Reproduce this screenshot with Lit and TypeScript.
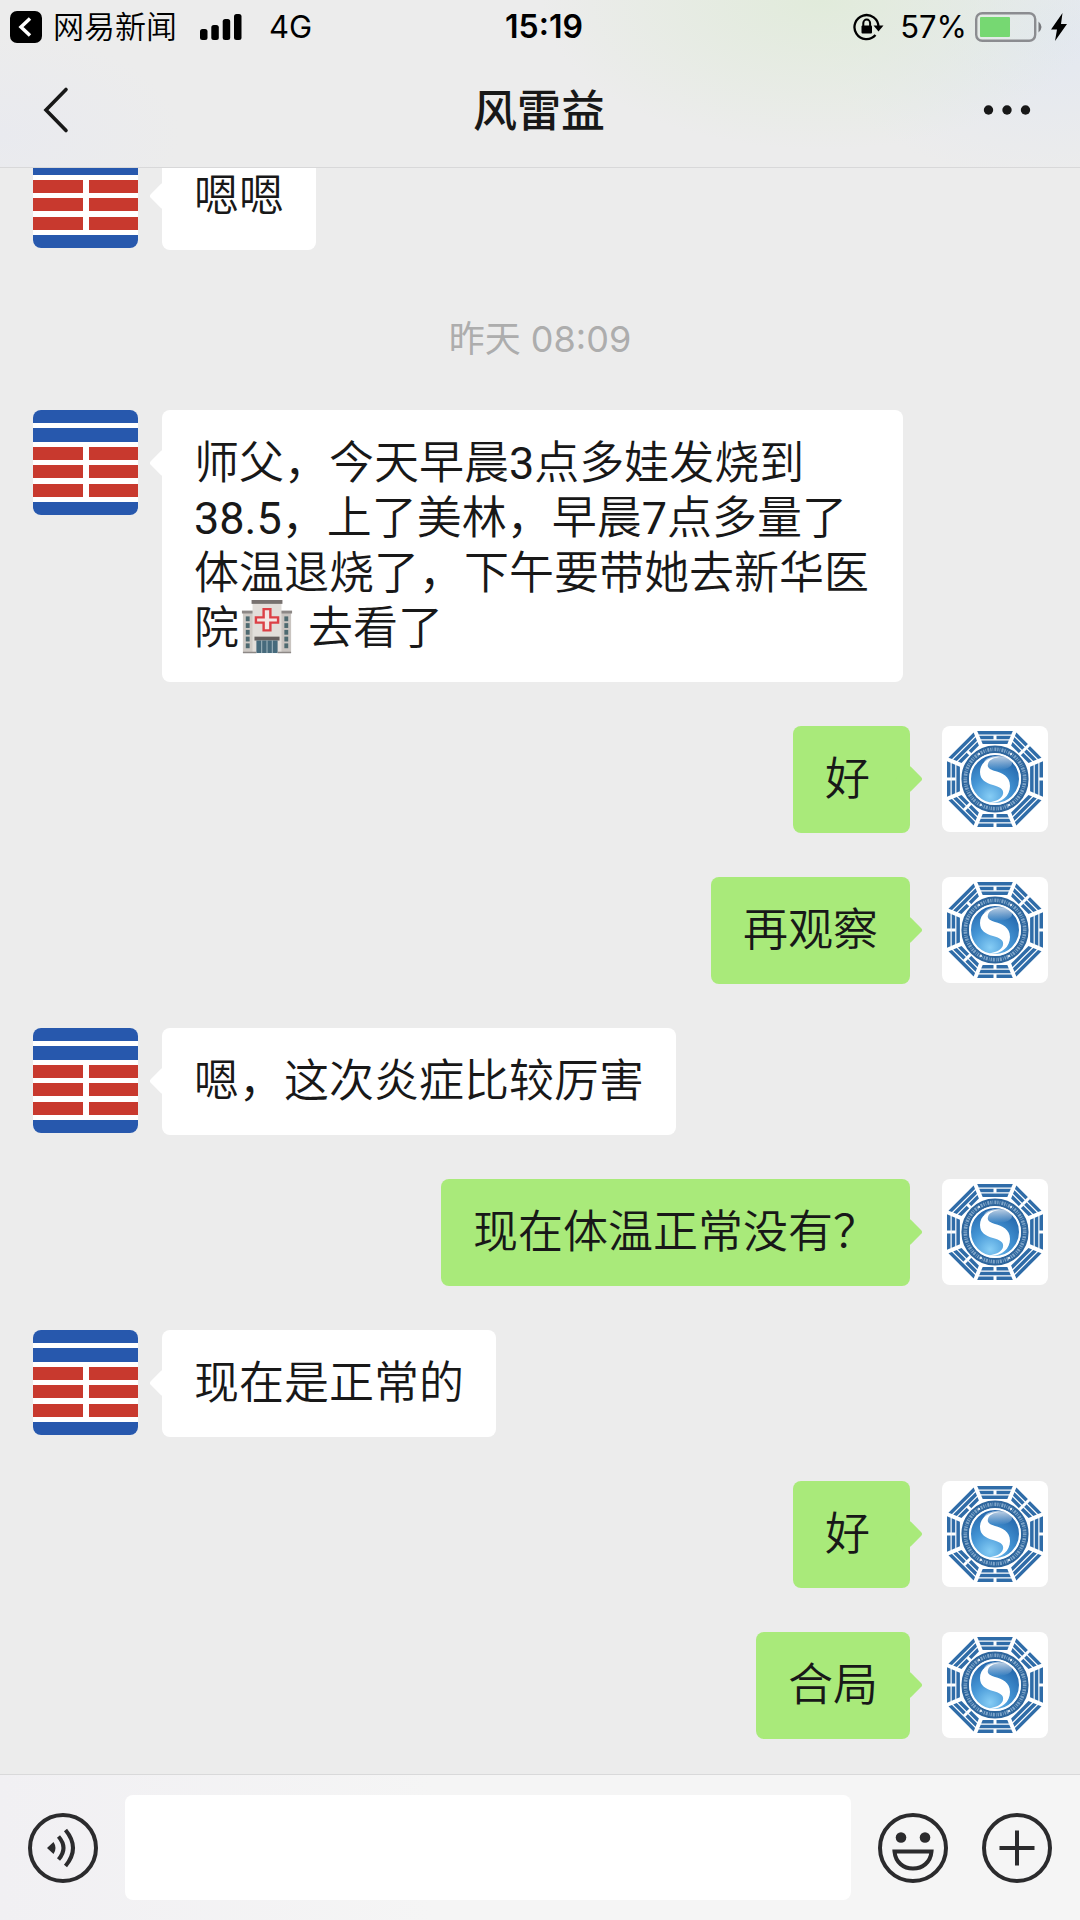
import { LitElement, html, css, svg } from "lit";
import { customElement, property } from "lit/decorators.js";

interface Message {
  kind: "in" | "out" | "time";
  text: string;
}

const hospital = html`<svg class="emoji" viewBox="0 0 52 56" role="img" aria-label="🏥">
  <rect x="1" y="13" width="13" height="41" fill="#cfcac5" />
  <rect x="38" y="13" width="13" height="41" fill="#c9c4c0" />
  <rect x="0" y="11" width="14" height="3" fill="#8d8886" />
  <rect x="38" y="11" width="14" height="3" fill="#8d8886" />
  <rect x="11" y="3" width="30" height="51" fill="#e2deda" />
  <rect x="10" y="0" width="32" height="4" fill="#77716f" />
  <g fill="#4e6a70">
    <rect x="4" y="17" width="4" height="5" /><rect x="4" y="24" width="4" height="5" />
    <rect x="4" y="31" width="4" height="5" /><rect x="4" y="38" width="4" height="5" />
    <rect x="4" y="45" width="4" height="5" />
    <rect x="44" y="17" width="4" height="5" /><rect x="44" y="24" width="4" height="5" />
    <rect x="44" y="31" width="4" height="5" /><rect x="44" y="38" width="4" height="5" />
    <rect x="44" y="45" width="4" height="5" />
  </g>
  <path d="M22.500 9.500h7v8.500h8v5.500h-8v8h-7v-8h-8v-5.500h8z" fill="#f3e6e4" stroke="#dc4046" stroke-width="2.500" />
  <rect x="13" y="38" width="26" height="4" fill="#655f5e" />
  <rect x="15" y="42" width="22" height="13" fill="#466a7c" />
  <path d="M20.500 42v13M26 42v13M31.500 42v13" stroke="#a9bcc4" stroke-width="1" />
  <path d="M1 54.500h14M37 54.500h14" stroke="#8d8886" stroke-width="1.500" />
</svg>`;

const hexagram = html`<svg class="picture" viewBox="0 0 105 105" aria-hidden="true">
  <rect width="105" height="105" fill="#fff" />
  <g fill="#2758ad">
    <rect width="105" height="13" /><rect y="18" width="105" height="14" /><rect y="92" width="105" height="13" />
  </g>
  <g fill="#c8392e">
    <rect y="37" width="50" height="13" /><rect x="56" y="37" width="49" height="13" />
    <rect y="55" width="50" height="13" /><rect x="56" y="55" width="49" height="13" />
    <rect y="74" width="50" height="13" /><rect x="56" y="74" width="49" height="13" />
  </g>
</svg>`;

/* Trigrams clockwise from the top, bars listed from the rim inward; true is a broken bar. */
const trigrams: boolean[][] = [
  [false, true, false],
  [true, true, true],
  [true, false, false],
  [false, false, false],
  [true, false, true],
  [false, true, true],
  [true, true, false],
  [false, false, true],
];

const bagua = html`<svg class="picture" viewBox="0 0 106 106" aria-hidden="true">
  <defs>
    <radialGradient id="orb" cx="0.4" cy="0.85" r="0.85">
      <stop offset="0" stop-color="#86cdf5" /><stop offset="0.45" stop-color="#4596d6" /><stop offset="1" stop-color="#2263a8" />
    </radialGradient>
    <linearGradient id="gloss" x2="0" y2="1">
      <stop offset="0" stop-color="#fff" stop-opacity="0.7" /><stop offset="1" stop-color="#fff" stop-opacity="0" />
    </linearGradient>
  </defs>
  <rect width="106" height="106" fill="#fff" />
  ${trigrams.map(
    (bars, i) => svg`<g transform="rotate(${i * 45} 53 53)" fill="#2f6ca8">
      ${bars.map((broken, j) => {
        const y = 5 + j * 4.7;
        const a = 17.8 - j * 2;
        const b = a - 1.5;
        return svg`<path d="M${53 - a} ${y}H${53 + a}L${53 + b} ${y + 3.5}H${53 - b}Z" />
          ${broken ? svg`<rect x="51.500" y=${y - 0.5} width="3" height="4.500" fill="#fff" />` : null}`;
      })}
    </g>`
  )}
  <circle cx="53" cy="53" r="29.700" fill="none" stroke="#2d659c" stroke-width="7.800" />
  <circle cx="53" cy="53" r="29.700" fill="none" stroke="#b4cfe6" stroke-width="3.600" stroke-dasharray="1.300 1 0.700 1.200 2 0.900" opacity="0.6" />
  <g fill="#fff">
    <circle cx="37" cy="28" r="1" /><circle cx="69" cy="28" r="1" /><circle cx="39" cy="79" r="1" /><circle cx="67" cy="79" r="1" />
  </g>
  <circle cx="53" cy="53" r="25" fill="url(#orb)" stroke="#fff" stroke-width="2" />
  <ellipse cx="56" cy="37" rx="14" ry="7" fill="url(#gloss)" />
  <path d="M57 31C46 31 38 37 38 46C38 54 44 57 51 59C58 61 62 63 61 68C60 72 56 75 47 76.500C58 78 68 71 68 60C68 50 60 47 53 45C47 43 45 41 46 38C47 34 51 32 57 31Z" fill="#fff" />
</svg>`;

@customElement("chat-message")
class ChatMessage extends LitElement {
  @property() kind = "in";
  @property() text = "";

  static styles = css`
    :host { display: block; flex: none; }
    .row { display: flex; align-items: flex-start; gap: 24px; padding: 0 32px 0 33px; }
    .out { flex-direction: row-reverse; gap: 32px; }
    .picture { display: block; flex: none; width: 105px; height: 105px; border-radius: 8px; }
    .out .picture { width: 106px; height: 106px; }
    .bubble {
      position: relative; box-sizing: border-box; min-width: 117px; max-width: 741px;
      padding: 26px 32px; border-radius: 8px; background: #fff; color: #181818;
      font-size: 45px; line-height: 55px; font-weight: 350; white-space: pre-wrap;
    }
    .out .bubble { background: #a9ea7a; }
    .bubble::before {
      content: ""; position: absolute; top: 43px; left: -9px; width: 20px; height: 20px;
      border-radius: 3px; background: inherit; transform: rotate(45deg);
    }
    .out .bubble::before { left: auto; right: -9px; }
    .body { position: relative; margin: 0; }
    .number { font-weight: 400; }
    .emoji { width: 52px; height: 54px; margin: -12px 4px -10px 2px; vertical-align: 0; }
    .time {
      margin: 0; padding: 27px 0 9px; text-align: center; color: #adadad;
      font: 36px/36px Inter, "Noto Sans CJK SC", sans-serif;
    }
  `;

  render() {
    if (this.kind === "time") return html`<p class="time">${this.text}</p>`;
    const parts = this.text.split(/(🏥|[\d.]+)/u);
    return html`<div class="row ${this.kind}">
      ${this.kind === "in" ? hexagram : bagua}
      <div class="bubble"><p class="body">${parts.map((p) =>
        p === "🏥" ? hospital : /^\d/.test(p) ? html`<span class="number">${p}</span>` : p
      )}</p></div>
    </div>`;
  }
}

@customElement("status-bar")
class StatusBar extends LitElement {
  static styles = css`
    :host { display: block; font-family: Inter, "Noto Sans CJK SC", sans-serif; }
    .bar { display: grid; grid-template-columns: 1fr auto 1fr; align-items: center; height: 54px; padding: 0 2px 0 10px; color: #000; }
    .side { display: flex; align-items: center; font-size: 31px; line-height: 36px; }
    .right { justify-content: flex-end; padding-right: 11px; }
    .back { display: flex; align-items: center; gap: 11px; padding: 0; border: 0; background: none; color: inherit; font: inherit; font-weight: 350; }
    .signal { margin: 0 27px 0 23px; }
    .clock { font-size: 32px; line-height: 36px; font-weight: 600; }
    .lock { margin-right: 16px; }
    .battery { margin: 0 8px; }
    svg { display: block; flex: none; }
  `;

  render() {
    return html`<div class="bar">
      <div class="side">
        <button class="back">
          <svg width="32" height="32" viewBox="0 0 32 32" aria-hidden="true">
            <rect width="32" height="32" rx="7" /><path d="M20 7.500L11 16l9 8.500" fill="none" stroke="#fff" stroke-width="3.500" />
          </svg>
          网易新闻
        </button>
        <svg class="signal" width="42" height="26" viewBox="0 0 42 26" aria-hidden="true">
          <rect y="15" width="7.500" height="11" rx="2.500" /><rect x="11.300" y="11" width="7.500" height="15" rx="2.500" />
          <rect x="22.700" y="5" width="7.500" height="21" rx="2.500" /><rect x="34" width="7.500" height="26" rx="2.500" />
        </svg>
        <span>4G</span>
      </div>
      <span class="clock">15:19</span>
      <div class="side right">
        <svg class="lock" width="31" height="28" viewBox="0 0 31 28" aria-hidden="true">
          <path d="M25.500 14A12 12 0 1 0 22.500 22" fill="none" stroke="#000" stroke-width="2.300" />
          <path d="M20.500 12.500h10l-5 6z" />
          <rect x="8.500" y="12.500" width="10.500" height="8" rx="1" />
          <path d="M10.300 13v-3a3.400 3.400 0 0 1 6.800 0v3" fill="none" stroke="#000" stroke-width="2" />
        </svg>
        <span>57%</span>
        <svg class="battery" width="68" height="30" viewBox="0 0 68 30" aria-hidden="true">
          <rect x="1.200" y="1.200" width="59" height="27.600" rx="6" fill="none" stroke="#8b8c90" stroke-width="2.400" />
          <rect x="5" y="5" width="30" height="20" rx="1" fill="#76d872" />
          <path d="M63.500 9.500q6 5.500 0 11z" fill="#77787c" />
        </svg>
        <svg width="16" height="28" viewBox="0 0 16 28" aria-hidden="true"><path d="M11.500 0L0 16.500h6L4 28 16 11h-6z" /></svg>
      </div>
    </div>`;
  }
}

@customElement("app-root")
class AppRoot extends LitElement {
  static styles = css`
    :host { display: block; font-family: Roboto, "Noto Sans CJK SC", sans-serif; }
    .screen { display: flex; flex-direction: column; height: 100vh; overflow: hidden; background: #ececec; }
    .top {
      position: relative; flex: none; border-bottom: 1px solid #d8d8d9;
      background:
        radial-gradient(ellipse 280px 150px at 76% 0, #e1ebdb, transparent),
        radial-gradient(ellipse 240px 150px at 98% 20%, #e3e8f0, transparent),
        radial-gradient(ellipse 180px 100px at 0 80%, #e9eaef, transparent), #ececec;
    }
    .nav { display: grid; grid-template-columns: 1fr auto 1fr; align-items: center; box-sizing: border-box; height: 113px; padding: 0 36px 2px 34px; }
    .title { margin: 0; padding-top: 4px; font-size: 44px; line-height: 64px; font-weight: 500; color: #181818; }
    .icon { display: block; padding: 0; border: 0; background: none; color: #2b2b2d; }
    .icon svg { display: block; }
    .more { justify-self: end; }
    .log { display: flex; flex-direction: column; justify-content: flex-end; flex: 1; min-height: 0; gap: 44px; padding-bottom: 35px; overflow: hidden; }
    .composer { display: flex; flex: none; align-items: center; gap: 27px; height: 145px; padding: 0 28px; border-top: 1px solid #d9d9da; background: linear-gradient(90deg, #f1f0f3, #f5f5f5 40%); }
    .tools { display: flex; gap: 34px; }
    .draft { flex: 1; min-width: 0; height: 105px; box-sizing: border-box; padding: 0 24px; border: 0; border-radius: 8px; background: #fff; font: 45px/55px Roboto, "Noto Sans CJK SC", sans-serif; }
  `;

  messages: Message[] = [
    { kind: "in", text: "嗯嗯" },
    { kind: "time", text: "昨天 08:09" },
    { kind: "in", text: "师父，今天早晨3点多娃发烧到38.5，上了美林，早晨7点多量了体温退烧了，下午要带她去新华医院🏥 去看了" },
    { kind: "out", text: "好" },
    { kind: "out", text: "再观察" },
    { kind: "in", text: "嗯，这次炎症比较厉害" },
    { kind: "out", text: "现在体温正常没有？" },
    { kind: "in", text: "现在是正常的" },
    { kind: "out", text: "好" },
    { kind: "out", text: "合局" },
  ];

  render() {
    return html`<div class="screen" lang="zh-CN">
      <header class="top">
        <status-bar></status-bar>
        <div class="nav">
          <button class="icon" aria-label="返回">
            <svg width="44" height="56" viewBox="0 0 44 56"><path d="M32 7.500L12 28l20 20.500" fill="none" stroke="#181818" stroke-width="3.600" stroke-linecap="round" /></svg>
          </button>
          <h1 class="title">风雷益</h1>
          <button class="icon more" aria-label="更多">
            <svg width="65" height="56" viewBox="0 0 65 56" fill="#181818"><circle cx="9.500" cy="28" r="4.700" /><circle cx="28" cy="28" r="4.700" /><circle cx="46.500" cy="28" r="4.700" /></svg>
          </button>
        </div>
      </header>
      <main class="log">${this.messages.map((m) => html`<chat-message .kind=${m.kind} .text=${m.text}></chat-message>`)}</main>
      <footer class="composer">
        <button class="icon" aria-label="语音">
          <svg width="70" height="70" viewBox="0 0 70 70" fill="none" stroke="currentColor" stroke-width="4">
            <circle cx="35" cy="35" r="33" />
            <path d="M19 35l6.500-6q4 6 0 12z" fill="currentColor" stroke="none" />
            <path d="M30.500 23.500q10 11.500 0 23M37.500 17q15 18 0 36" />
          </svg>
        </button>
        <input class="draft" type="text" aria-label="输入消息" />
        <div class="tools">
          <button class="icon" aria-label="表情">
            <svg width="70" height="70" viewBox="0 0 70 70" fill="none" stroke="currentColor" stroke-width="4">
              <circle cx="35" cy="35" r="33" />
              <circle cx="23" cy="24.500" r="5.300" fill="currentColor" stroke="none" /><circle cx="47" cy="24.500" r="5.300" fill="currentColor" stroke="none" />
              <path d="M16.500 38.500h37c-1 11-9 17-18.500 17s-17.500-6-18.500-17z" />
            </svg>
          </button>
          <button class="icon" aria-label="更多功能">
            <svg width="70" height="70" viewBox="0 0 70 70" fill="none" stroke="currentColor" stroke-width="4">
              <circle cx="35" cy="35" r="33" /><path d="M35 17.500v35M17.500 35h35" />
            </svg>
          </button>
        </div>
      </footer>
    </div>`;
  }
}
